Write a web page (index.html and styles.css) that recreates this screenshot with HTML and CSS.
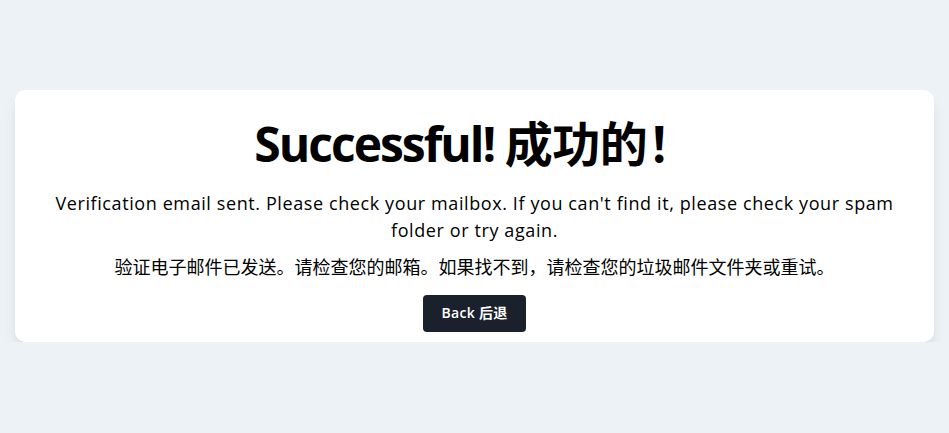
FILE: index.html
```html
<!DOCTYPE html>
<html lang="en">
<head>
<meta charset="utf-8">
<title>Successful</title>
<link rel="stylesheet" href="styles.css">
</head>
<body>
<main class="page">
  <section class="card">
    <h1 class="title">Successful! <span class="zh">成功的！</span></h1>
    <p class="msg">Verification email sent. Please check your mailbox. If you can't find it, please check your spam folder or try again.</p>
    <p class="msg msg-zh">验证电子邮件已发送。请检查您的邮箱。如果找不到，请检查您的垃圾邮件文件夹或重试。</p>
    <button class="btn" type="button">Back 后退</button>
  </section>
</main>
</body>
</html>
```

FILE: styles.css
```css
html, body {
  margin: 0;
  padding: 0;
}
body {
  background: #edf2f7;
  font-family: "Open Sans", "Noto Sans CJK SC", sans-serif;
  color: #000;
}
.page {
  padding: 90px 15px 0;
}
.card {
  background: #fff;
  border-radius: 10px;
  box-shadow: 0 10px 15px -3px rgba(0,0,0,0.1), 0 4px 6px -2px rgba(0,0,0,0.05);
  padding: 21px 40px 10px;
  text-align: center;
  display: flex;
  flex-direction: column;
  align-items: center;
}
.title {
  margin: 0;
  font-size: 48px;
  font-weight: 700;
  line-height: 60px;
  letter-spacing: -2px;
}
.title .zh {
  font-family: "Noto Sans CJK SC", sans-serif;
  letter-spacing: -0.5px;
}
.msg {
  margin: 16px 0 0;
  font-size: 18px;
  line-height: 27px;
  letter-spacing: 0.6px;
  max-width: 845px;
}
.msg-zh {
  margin-top: 9px;
  letter-spacing: 0;
  font-family: "Noto Sans CJK SC", sans-serif;
}
.btn {
  margin-top: 15px;
  background: #1a202c;
  color: #fff;
  border: 0;
  border-radius: 4px;
  font-family: "Open Sans", "Noto Sans CJK SC", sans-serif;
  font-size: 14px;
  font-weight: 600;
  line-height: 20px;
  padding: 8px 18.5px 9px;
  letter-spacing: 0.3px;
  cursor: pointer;
}
```
